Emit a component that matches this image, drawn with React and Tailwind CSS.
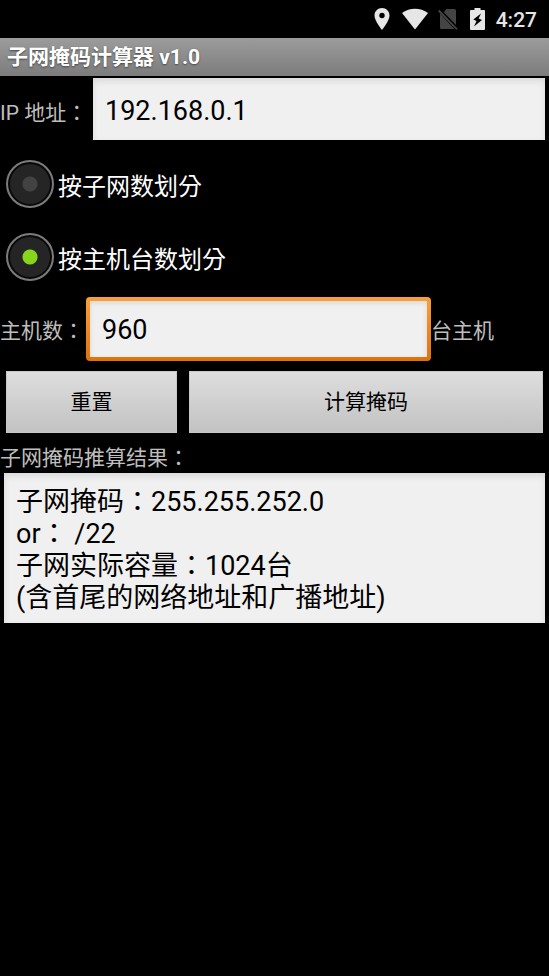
import React, { useState } from 'react';

const MODES = [
  { value: 'subnets', label: '按子网数划分' },
  { value: 'hosts', label: '按主机台数划分' }
];

const LABEL = 'shrink-0 text-[21px] leading-6 text-[#bebebe]';
const FIELD =
  'block min-w-0 bg-[#f0f0f0] text-[27px] leading-8 text-black outline-none';
const BUTTON =
  'h-[62px] border border-[#c8c8c8] bg-linear-to-b from-[#dedede] to-[#c2c2c2] text-[21px] leading-6 text-black';

const StatusBar = () => (
  <div className="flex h-[38px] items-center justify-end bg-black pr-3 text-[#e6e6e6]">
    <svg className="mr-3 h-[22px] w-4" viewBox="0 0 16 22" fill="currentColor">
      <path
        fillRule="evenodd"
        d="M8 0C3.7 0 .5 3.3.5 7.5.5 13 8 22 8 22s7.500-9 7.500-14.500C15.500 3.300 12.300 0 8 0Zm0 4.800a2.700 2.700 0 1 1 0 5.400 2.700 2.700 0 0 1 0-5.400Z"
      />
    </svg>
    <svg className="mr-[10px] h-[22px] w-[26px]" viewBox="0 0 26 22" fill="currentColor">
      <path d="M0 5C7.500-.7 18.500-.7 26 5L13 21.500Z" />
    </svg>
    <svg className="mr-3 h-[22px] w-5" viewBox="0 0 20 22">
      <path
        fill="#444"
        d="M8.500 1H16.500A1.500 1.500 0 0 1 18 2.500V17L5.800 4.300ZM2 5.500V19.500A1.500 1.500 0 0 0 3.500 21H16.300Z"
      />
      <path stroke="#444" strokeWidth="1.800" d="M.7 2.500 19 21.300" />
    </svg>
    <svg className="mr-[11px] h-[22px] w-[15px]" viewBox="0 0 15 22" fill="currentColor">
      <path
        fillRule="evenodd"
        d="M4.500 0h6v2H14q1 0 1 1v18q0 1-1 1H1q-1 0-1-1V3q0-1 1-1h3.500ZM11 5.500 3.300 11.500 6.500 13 4 18.500 12 12 8.700 10.500Z"
      />
    </svg>
    <span className="pt-[2px] text-[21px] leading-6 font-medium">4:27</span>
  </div>
);

const App = () => {
  const [ip, setIp] = useState('192.168.0.1');
  const [mode, setMode] = useState('hosts');
  const [hosts, setHosts] = useState('960');
  const [result, setResult] = useState(
    '子网掩码：255.255.252.0\nor： /22\n子网实际容量：1024台\n(含首尾的网络地址和广播地址)'
  );

  const reset = () => {
    setIp('');
    setHosts('');
    setResult('');
  };

  const calculate = () => {
    const count = Number(hosts);
    if (!count || count < 1) return;
    const bits = Math.min(32, Math.ceil(Math.log2(count)));
    const prefix = mode === 'hosts' ? 32 - bits : Math.min(32, 24 + bits);
    const size = 2 ** (32 - prefix);
    const mask = 2 ** 32 - size;
    const dotted = [24, 16, 8, 0].map(s => Math.floor(mask / 2 ** s) % 256).join('.');
    setResult(
      `子网掩码：${dotted}\nor： /${prefix}\n子网实际容量：${size}台\n(含首尾的网络地址和广播地址)`
    );
  };

  return (
    <div className="min-h-screen bg-black font-[Roboto,'Noto_Sans_CJK_TC',sans-serif]">
      <StatusBar />
      <header className="flex h-[38px] items-center bg-linear-to-b from-[#9c9c9c] to-[#7c7c7c] px-[7px]">
        <h1 className="text-[21px] leading-6 font-bold text-white text-shadow-[0_1px_2px_#444]">
          子网掩码计算器 v1.0
        </h1>
      </header>

      <main>
        <div className="flex items-center pt-[2px] pr-1">
          <label htmlFor="ip" className={`${LABEL} w-[93px] pt-2`}>IP 地址：</label>
          <input
            id="ip"
            type="text"
            value={ip}
            onChange={e => setIp(e.target.value)}
            className={`${FIELD} h-[62px] flex-1 px-3 pt-1 shadow-[inset_0_3px_6px_#d8d8d8]`}
          />
        </div>

        <div className="pt-[7px]">
          {MODES.map(m => (
            <label key={m.value} className="flex h-[73px] items-center gap-1 pl-[6px] text-[24px] leading-7 text-white">
              <input
                type="radio"
                name="mode"
                value={m.value}
                checked={mode === m.value}
                onChange={() => setMode(m.value)}
                className="size-12 shrink-0 appearance-none rounded-full border-2 border-[#7b7b7b] bg-radial from-[#424242] from-[7px] to-[#252525] to-[8px] shadow-[inset_0_0_0_2px_#080808] checked:from-[#86d51a]"
              />
              <span className="pt-[6px]">{m.label}</span>
            </label>
          ))}
        </div>

        <div className="flex items-center pt-1">
          <label htmlFor="hosts" className={`${LABEL} w-[86px] pt-1`}>主机数：</label>
          <div className="min-w-0 flex-1 rounded bg-linear-to-b from-[#f9a03a] to-[#de7206] p-1">
            <input
              id="hosts"
              type="text"
              value={hosts}
              onChange={e => setHosts(e.target.value)}
              className={`${FIELD} h-14 w-full px-3 pt-[2px] shadow-[inset_0_2px_5px_#d8d8d8]`}
            />
          </div>
          <span className={`${LABEL} w-[118px] pt-1`}>台主机</span>
        </div>

        <div className="grid grid-cols-[171fr_354fr] gap-3 px-[6px] pt-[10px]">
          <button type="button" onClick={reset} className={BUTTON}>重置</button>
          <button type="button" onClick={calculate} className={BUTTON}>计算掩码</button>
        </div>

        <label htmlFor="result" className={`${LABEL} block pt-[13px] pb-[3px]`}>子网掩码推算结果：</label>
        <div className="pr-1 pl-1">
          <textarea
            id="result"
            rows={4}
            value={result}
            onChange={e => setResult(e.target.value)}
            className={`${FIELD} w-full resize-none overflow-hidden px-3 pt-[13px] pb-[9px] shadow-[inset_0_3px_6px_#d8d8d8]`}
          />
        </div>
      </main>
    </div>
  );
};

export default App;
